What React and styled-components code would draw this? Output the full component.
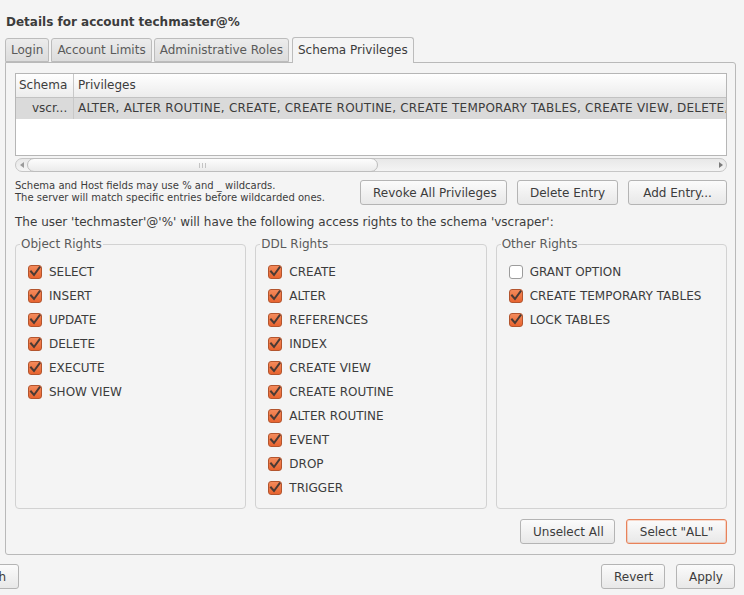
import styled, { createGlobalStyle } from "styled-components";

const GlobalStyle = createGlobalStyle`
  html, body {
    margin: 0;
    padding: 0;
    background: #f4f4f4;
  }
  body {
    font-family: "DejaVu Sans", "Liberation Sans", sans-serif;
    font-size: 12px;
    color: #3c3c3c;
  }
`;

const objectRights = ["SELECT", "INSERT", "UPDATE", "DELETE", "EXECUTE", "SHOW VIEW"];
const ddlRights = [
  "CREATE", "ALTER", "REFERENCES", "INDEX", "CREATE VIEW",
  "CREATE ROUTINE", "ALTER ROUTINE", "EVENT", "DROP", "TRIGGER",
];
const otherRights = [
  { name: "GRANT OPTION", on: false },
  { name: "CREATE TEMPORARY TABLES", on: true },
  { name: "LOCK TABLES", on: true },
];

const Check = ({ on }) => (
  <Box $on={on}>
    {on && (
      <svg width="12" height="12" viewBox="0 0 12 12">
        <path d="M2 5.5 L5 9 L10.5 1.5" fill="none" stroke="#4a3a34" strokeWidth="2" strokeLinecap="square" />
      </svg>
    )}
  </Box>
);

const App = () => {
  return (
    <Page>
      <GlobalStyle />
      <Title>Details for account techmaster@%</Title>
      <Tabs>
        <Tab>Login</Tab>
        <Tab>Account Limits</Tab>
        <Tab>Administrative Roles</Tab>
        <Tab $active>Schema Privileges</Tab>
      </Tabs>
      <Panel>
        <Table>
          <HeadRow>
            <SchemaCell>Schema</SchemaCell>
            <PrivCell>Privileges</PrivCell>
          </HeadRow>
          <DataRow>
            <SchemaCell $data>vscr...</SchemaCell>
            <PrivCell $data>ALTER, ALTER ROUTINE, CREATE, CREATE ROUTINE, CREATE TEMPORARY TABLES, CREATE VIEW, DELETE, DROP, EVENT</PrivCell>
          </DataRow>
        </Table>
        <Scrollbar>
          <Stepper>
            <svg width="4" height="6" viewBox="0 0 4 6"><path d="M4 0 L0 3 L4 6Z" fill="#9a9a9a" /></svg>
          </Stepper>
          <Thumb>
            <Grip />
          </Thumb>
          <Trough />
          <Stepper>
            <svg width="4" height="6" viewBox="0 0 4 6"><path d="M0 0 L4 3 L0 6Z" fill="#7a7a7a" /></svg>
          </Stepper>
        </Scrollbar>
        <ActionRow>
          <Note>
            Schema and Host fields may use % and _ wildcards.<br />
            The server will match specific entries before wildcarded ones.
          </Note>
          <ButtonGroup>
            <Button $w={147}>Revoke All Privileges</Button>
            <Button $w={101}>Delete Entry</Button>
            <Button $w={99}>Add Entry...</Button>
          </ButtonGroup>
        </ActionRow>
        <Info>The user 'techmaster'@'%' will have the following access rights to the schema 'vscraper':</Info>
        <Groups>
          <Group>
            <legend>Object Rights</legend>
            {objectRights.map((r) => (
              <Item key={r}><Check on />{r}</Item>
            ))}
          </Group>
          <Group>
            <legend>DDL Rights</legend>
            {ddlRights.map((r) => (
              <Item key={r}><Check on />{r}</Item>
            ))}
          </Group>
          <Group>
            <legend>Other Rights</legend>
            {otherRights.map((r) => (
              <Item key={r.name}><Check on={r.on} />{r.name}</Item>
            ))}
          </Group>
        </Groups>
        <SelectRow>
          <Button $w={95}>Unselect All</Button>
          <Button $w={101} $focus>Select "ALL"</Button>
        </SelectRow>
      </Panel>
      <Footer>
        <Clip>
          <Button>Refresh</Button>
        </Clip>
        <ButtonGroup>
          <Button $w={64}>Revert</Button>
          <Button $w={59}>Apply</Button>
        </ButtonGroup>
      </Footer>
    </Page>
  );
};

export default App;

const Page = styled.div`
  width: 744px;
  height: 595px;
  overflow: hidden;
  display: flex;
  flex-direction: column;
`;

const Title = styled.div`
  font-weight: bold;
  padding: 14px 0 0 6px;
  height: 16px;
  line-height: 16px;
`;

const Tabs = styled.div`
  display: flex;
  align-items: flex-end;
  gap: 2px;
  margin: 7px 0 0 5px;
  position: relative;
  z-index: 1;
`;

const Tab = styled.div`
  height: ${(p) => (p.$active ? "25px" : "22px")};
  line-height: ${(p) => (p.$active ? "24px" : "22px")};
  padding: 0 5px;
  border: 1px solid #bcbcbc;
  border-bottom: ${(p) => (p.$active ? "none" : "1px solid #bcbcbc")};
  border-radius: 3px 3px 0 0;
  background: ${(p) => (p.$active ? "#f4f4f4" : "linear-gradient(#ececec, #dcdcdc)")};
  color: ${(p) => (p.$active ? "#3c3c3c" : "#5a5a5a")};
  margin-bottom: ${(p) => (p.$active ? "-1px" : "0")};
  margin-left: ${(p) => (p.$active ? "1px" : "0")};
`;

const Panel = styled.div`
  margin: 0 8px 0 5px;
  height: 481px;
  border: 1px solid #b9b9b9;
  border-radius: 0 3px 3px 3px;
  padding: 10px 8px 0 9px;
  display: flex;
  flex-direction: column;
`;

const Table = styled.div`
  height: 81px;
  border: 1px solid #b6b6b6;
  background: #fff;
  overflow: hidden;
`;

const HeadRow = styled.div`
  display: flex;
  height: 23px;
  line-height: 23px;
  background: linear-gradient(#ffffff, #ececec);
  border-bottom: 1px solid #c2c2c2;
`;

const DataRow = styled.div`
  display: flex;
  height: 21px;
  line-height: 21px;
  background: #dadada;
  white-space: nowrap;
`;

const SchemaCell = styled.div`
  width: 58px;
  flex: none;
  box-sizing: border-box;
  padding-left: ${(p) => (p.$data ? "16px" : "3px")};
  border-right: 1px solid #c8c8c8;
`;

const PrivCell = styled.div`
  padding-left: 4px;
  white-space: nowrap;
  overflow: hidden;
  letter-spacing: ${(p) => (p.$data ? "0.22px" : "0")};
`;

const Scrollbar = styled.div`
  margin-top: 2px;
  height: 12px;
  border: 1px solid #c6c6c6;
  border-radius: 7px;
  background: linear-gradient(#e8e8e8, #f4f4f4);
  display: flex;
  align-items: stretch;
`;

const Stepper = styled.div`
  width: 11px;
  display: flex;
  align-items: center;
  justify-content: center;
  flex: none;
`;

const Thumb = styled.div`
  width: 351px;
  box-sizing: border-box;
  border: 1px solid #bdbdbd;
  border-radius: 7px;
  margin: -1px 0;
  background: linear-gradient(#fdfdfd, #ebebeb);
  display: flex;
  align-items: center;
  justify-content: center;
`;

const Grip = styled.div`
  width: 7px;
  height: 5px;
  background: repeating-linear-gradient(90deg, #c4c4c4 0 1px, transparent 1px 3px);
`;

const Trough = styled.div`
  flex: 1;
`;

const ActionRow = styled.div`
  display: flex;
  justify-content: space-between;
  align-items: flex-start;
  margin-top: 8px;
`;

const Note = styled.div`
  font-size: 10px;
  line-height: 12px;
`;

const ButtonGroup = styled.div`
  display: flex;
  gap: 10px;
`;

const Button = styled.button`
  height: 25px;
  width: ${(p) => (p.$w ? `${p.$w}px` : "auto")};
  padding: 0 12px;
  font-family: "DejaVu Sans", "Liberation Sans", sans-serif;
  font-size: 12px;
  color: #3c3c3c;
  background: linear-gradient(#fbfbfb, #e8e8e8);
  border: 1px solid ${(p) => (p.$focus ? "#e8825a" : "#b4b4b4")};
  box-shadow: ${(p) => (p.$focus ? "inset 0 0 0 1px rgba(240,150,110,0.35)" : "none")};
  border-radius: 3px;
  white-space: nowrap;
  flex: none;
`;

const Info = styled.div`
  margin-top: 10px;
  line-height: 14px;
`;

const Groups = styled.div`
  display: grid;
  grid-template-columns: repeat(3, 1fr);
  gap: 9px;
  margin-top: 8px;
`;

const Group = styled.fieldset`
  margin: 0;
  height: 272px;
  box-sizing: border-box;
  padding: 9px 0 0 12px;
  border: 1px solid #d2d2d2;
  border-radius: 4px;
  min-width: 0;

  legend {
    padding: 0 1px;
    margin-left: -8px;
    line-height: 14px;
    color: #5a5a5a;
  }
`;

const Item = styled.div`
  display: flex;
  align-items: center;
  gap: 7px;
  height: 24px;
`;

const Box = styled.div`
  width: 14px;
  height: 14px;
  box-sizing: border-box;
  border-radius: 3px;
  border: 1px solid ${(p) => (p.$on ? "#b3552e" : "#9c9c9c")};
  background: ${(p) => (p.$on ? "linear-gradient(#f38a5b, #e8642f)" : "#fff")};
  display: flex;
  align-items: center;
  justify-content: center;
  flex: none;
`;

const SelectRow = styled.div`
  display: flex;
  justify-content: flex-end;
  gap: 11px;
  margin-top: 10px;
`;

const Footer = styled.div`
  display: flex;
  justify-content: space-between;
  align-items: center;
  margin-top: 9px;
  padding-right: 9px;

  ${ButtonGroup} {
    gap: 11px;
  }
`;

const Clip = styled.div`
  width: 19px;
  overflow: hidden;
  display: flex;
  justify-content: flex-end;
`;
